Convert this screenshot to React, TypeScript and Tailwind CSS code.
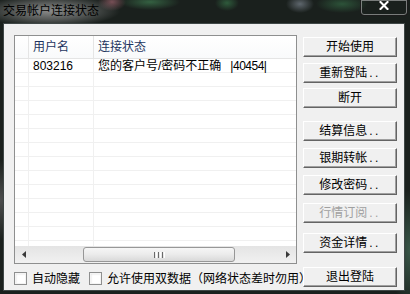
import React from "react";

const FONT = "font-['Liberation_Sans','Noto_Sans_CJK_SC',sans-serif]";

function Btn({ label, dots = false, className = "", disabled = false }: { label: string; dots?: boolean; className?: string; disabled?: boolean }) {
  return (
    <div
      className={`flex items-center justify-center w-[94px] h-[20px] bg-[#f0f0f0] border border-t-white border-l-white border-r-[#646464] border-b-[#646464] shadow-[inset_-1px_-1px_0_#a0a0a0] text-[12px] leading-none whitespace-nowrap ${
        disabled ? "text-[#a0a0a0]" : "text-black"
      } ${className}`}
    >
      <span>{label}</span>
      {dots && <span className="ml-[2px] tracking-[2.5px]">..</span>}
    </div>
  );
}

function Check({ label }: { label: string }) {
  return (
    <div className="flex items-center shrink-0">
      <div className="w-[13px] h-[13px] shrink-0 border border-[#8e8f8f] bg-white shadow-[inset_0_0_0_1px_#f4f4f4,inset_1px_1px_2px_#d6d6d6]" />
      <span className="ml-[5px] text-[12px] leading-none text-black whitespace-nowrap">{label}</span>
    </div>
  );
}

export default function App() {
  const rows = Array.from({ length: 14 });
  return (
    <div
      className={`${FONT} w-[410px] h-[294px] overflow-hidden flex flex-col bg-[#1a201d] bg-[radial-gradient(ellipse_70px_16px_at_50px_11px,rgba(150,150,150,0.9)_0%,rgba(150,150,150,0.5)_50%,transparent_100%),radial-gradient(ellipse_14px_9px_at_112px_2px,rgba(150,95,105,0.75)_0%,transparent_100%),radial-gradient(ellipse_30px_8px_at_150px_2px,rgba(70,140,90,0.6)_0%,transparent_100%),radial-gradient(ellipse_12px_8px_at_227px_3px,rgba(60,130,80,0.6)_0%,transparent_100%),radial-gradient(ellipse_14px_9px_at_300px_4px,rgba(150,160,175,0.55)_0%,transparent_100%),radial-gradient(ellipse_26px_9px_at_342px_4px,rgba(60,125,80,0.55)_0%,transparent_100%),radial-gradient(ellipse_30px_40px_at_0px_200px,rgba(90,90,90,0.8)_0%,transparent_100%),radial-gradient(ellipse_20px_60px_at_410px_250px,rgba(70,110,90,0.7)_0%,transparent_100%)]`}
    >
      {/* Title bar */}
      <div className="h-[23px] flex items-start shrink-0">
        <span className="pl-[3px] pt-[4px] text-[12px] leading-[14px] text-black">交易帐户连接状态</span>
        <div className="ml-auto mr-[2px] w-[48px] h-[16px] rounded-b-[4px] border border-t-0 border-[#1c1c1c] shadow-[inset_0_0_0_1px_rgba(200,200,200,0.55)] flex justify-center">
          <svg width="10" height="9" viewBox="0 0 10 9" className="mt-[1px]">
            <path d="M1.5 1 L8.5 8 M8.5 1 L1.5 8" stroke="#2a2a2a" strokeWidth="3.4" strokeLinecap="square" />
            <path d="M1.5 1 L8.5 8 M8.5 1 L1.5 8" stroke="#ffffff" strokeWidth="2" strokeLinecap="square" />
          </svg>
        </div>
      </div>

      {/* Body */}
      <div className="ml-[3px] mr-[5px] h-[268px] border border-[#3f4746] bg-[#f0f0f0] flex pl-[10px] pt-[11px]">
        {/* Left column */}
        <div className="w-[283px] shrink-0 flex flex-col">
          <div className="h-[229px] border border-[#8e8f8f] bg-white flex flex-col overflow-hidden">
            {/* header */}
            <div className="h-[23px] shrink-0 flex border-b border-[#e5e5e5] bg-gradient-to-b from-white to-[#f9fafb] text-[12px] leading-none text-[#1e3560]">
              <div className="w-[14px] border-r border-[#e5e5e5]" />
              <div className="w-[65px] border-r border-[#e5e5e5] flex items-center pl-[4px]">用户名</div>
              <div className="flex-1 flex items-center pl-[4px]">连接状态</div>
            </div>
            {/* rows */}
            <div className="flex-1 overflow-hidden">
              {rows.map((_, i) => (
                <div key={i} className="h-[14px] flex border-b border-[#f0f0f0] text-[12px] leading-none text-black">
                  <div className="w-[14px] border-r border-[#f0f0f0]" />
                  <div className="w-[65px] border-r border-[#f0f0f0] flex items-center pl-[4px] whitespace-nowrap">
                    {i === 0 ? "803216" : ""}
                  </div>
                  <div className="flex-1 flex items-center pl-[4px] whitespace-nowrap">
                    {i === 0 ? (
                      <>
                        <span>您的客户号/密码不正确</span>
                        <span className="ml-[9px] tracking-[-0.5px]">|40454|</span>
                      </>
                    ) : null}
                  </div>
                </div>
              ))}
            </div>
            {/* horizontal scrollbar */}
            <div className="h-[17px] shrink-0 flex items-center bg-gradient-to-b from-[#e4e4e4] to-[#f1f1f1]">
              <div className="w-[17px] flex justify-center items-center">
                <svg width="4" height="7" viewBox="0 0 4 7">
                  <polygon points="4,0 0,3.5 4,7" fill="#3a3a3a" />
                </svg>
              </div>
              <div className="flex-1 h-full py-[1px] pl-[51px]">
                <div className="w-[152px] h-full rounded-[3px] border border-[#979797] bg-gradient-to-b from-[#f6f6f6] via-[#ebebeb] to-[#d9d9d9] flex items-center justify-center gap-[1px]">
                  <div className="w-[1px] h-[6px] bg-[#6a6a6a]" />
                  <div className="w-[1px] h-[6px] bg-white" />
                  <div className="w-[1px] h-[6px] bg-[#6a6a6a]" />
                  <div className="w-[1px] h-[6px] bg-white" />
                  <div className="w-[1px] h-[6px] bg-[#6a6a6a]" />
                  <div className="w-[1px] h-[6px] bg-white" />
                </div>
              </div>
              <div className="w-[17px] flex justify-center items-center">
                <svg width="4" height="7" viewBox="0 0 4 7">
                  <polygon points="0,0 4,3.5 0,7" fill="#3a3a3a" />
                </svg>
              </div>
            </div>
          </div>
          <div className="mt-[8px] flex items-center">
            <Check label="自动隐藏" />
            <div className="ml-[9px] shrink-0">
              <Check label="允许使用双数据（网络状态差时勿用）" />
            </div>
          </div>
        </div>

        {/* Right column */}
        <div className="ml-[6px] mt-[2px] flex flex-col">
          <Btn label="开始使用" />
          <Btn label="重新登陆" dots className="mt-[6px]" />
          <Btn label="断开" className="mt-[5px]" />
          <Btn label="结算信息" dots className="mt-[13px]" />
          <Btn label="银期转帐" dots className="mt-[7px]" />
          <Btn label="修改密码" dots className="mt-[7px]" />
          <Btn label="行情订阅" dots className="mt-[8px]" disabled />
          <Btn label="资金详情" dots className="mt-[10px]" />
          <Btn label="退出登陆" className="mt-[14px]" />
        </div>
      </div>
    </div>
  );
}
